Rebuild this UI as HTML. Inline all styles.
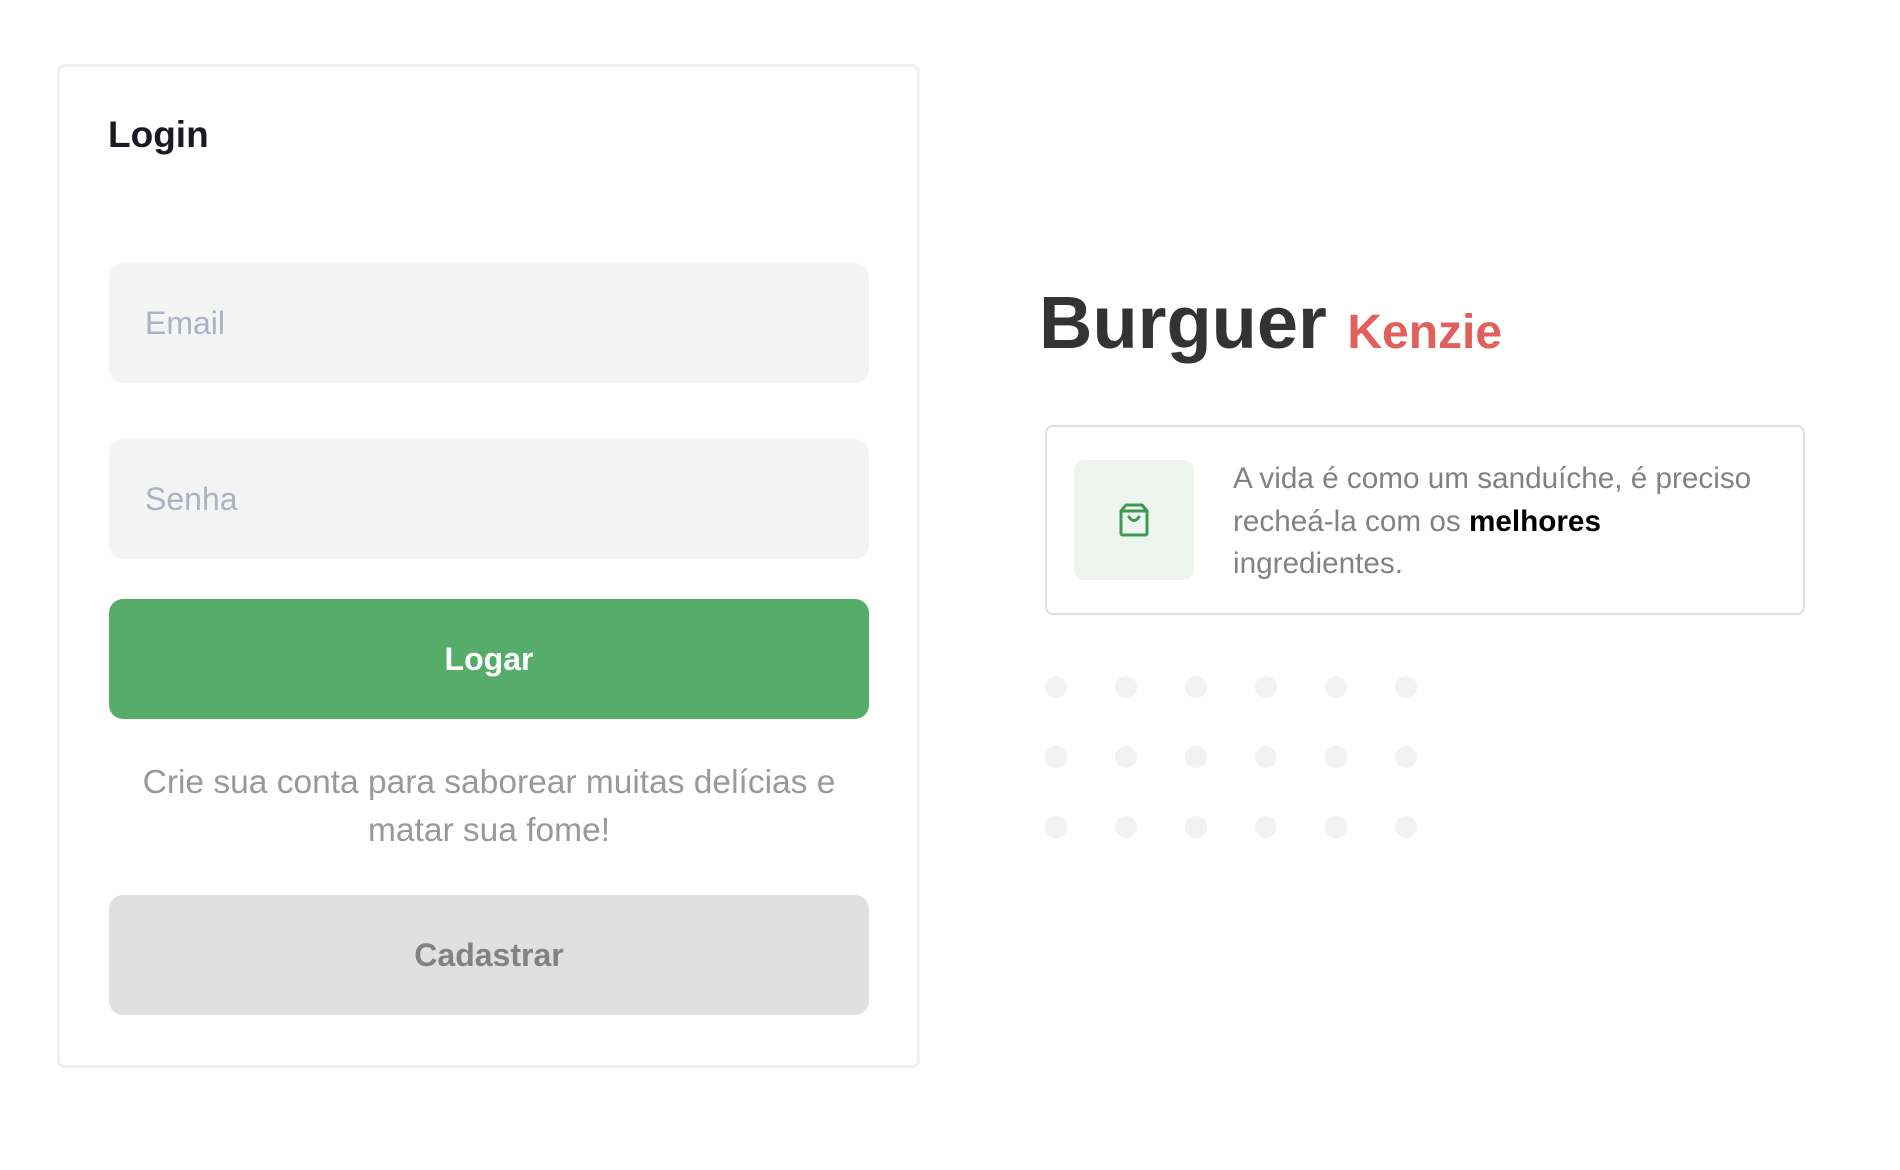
<!DOCTYPE html>
<html><head><meta charset="utf-8"><style>
*{margin:0;padding:0;box-sizing:border-box}
body{width:1900px;height:1170px;background:#fff;font-family:"Liberation Sans",sans-serif;position:relative;overflow:hidden}
.card{position:absolute;left:57px;top:64px;width:863px;height:1004px;border:3px solid #f0f0f0;border-radius:8px}
.abs{position:absolute}
.login{left:108px;top:114px;font-size:37px;font-weight:bold;color:#1a1a24}
.inp{left:109px;width:760px;height:120px;background:#f4f4f4;border-radius:14px;color:#a8b3c5;font-size:32px;padding-left:36px;line-height:120px}
.btn{left:109px;width:760px;height:120px;border-radius:14px;text-align:center;line-height:120px;font-size:32px;font-weight:bold}
.txt{left:89px;width:800px;text-align:center;font-size:33.5px;color:#999;line-height:48px}
.dot{position:absolute;width:22px;height:22px;border-radius:50%;background:#f2f2f2}
</style></head><body>
<div class="card"></div>
<div class="abs login">Login</div>
<div class="abs inp" style="top:263px">Email</div>
<div class="abs inp" style="top:439px">Senha</div>
<div class="abs btn" style="top:599px;background:#55ad69;color:#fff">Logar</div>
<div class="abs txt" style="top:759px">Crie sua conta para saborear muitas delícias e<br>matar sua fome!</div>
<div class="abs btn" style="top:895px;background:#e0e0e0;color:#828282">Cadastrar</div>

<div class="abs" style="left:1039px;top:280px;font-size:74px;font-weight:bold;color:#333;white-space:nowrap;line-height:86px">Burguer <span style="font-size:48px;color:#e0605c">Kenzie</span></div>

<div class="abs" style="left:1045px;top:425px;width:760px;height:190px;border:2px solid #e0e0e0;border-radius:8px"></div>
<div class="abs" style="left:1074px;top:460px;width:120px;height:120px;background:#eef5ef;border-radius:10px">
<svg width="120" height="120" viewBox="0 0 120 120" style="position:absolute;left:0;top:0"><g fill="none" stroke="#3d9a55" stroke-width="3" stroke-linejoin="round" stroke-linecap="round"><path d="M47 73 V51 L52 45 H68 L73 51 V73 Q73 75 71 75 H49 Q47 75 47 73 Z"/><path d="M47 51 H73"/><path d="M55 57 Q60 64 65 57"/></g></svg>
</div>
<div class="abs" style="left:1233px;top:458px;font-size:29.7px;color:#828282;line-height:42.5px;white-space:nowrap">A vida é como um sanduíche, é preciso<br>recheá-la com os <b style="color:#000">melhores</b><br>ingredientes.</div>

<div class="dot" style="left:1045px;top:676px"></div><div class="dot" style="left:1115px;top:676px"></div><div class="dot" style="left:1185px;top:676px"></div><div class="dot" style="left:1255px;top:676px"></div><div class="dot" style="left:1325px;top:676px"></div><div class="dot" style="left:1395px;top:676px"></div>
<div class="dot" style="left:1045px;top:746px"></div><div class="dot" style="left:1115px;top:746px"></div><div class="dot" style="left:1185px;top:746px"></div><div class="dot" style="left:1255px;top:746px"></div><div class="dot" style="left:1325px;top:746px"></div><div class="dot" style="left:1395px;top:746px"></div>
<div class="dot" style="left:1045px;top:816px"></div><div class="dot" style="left:1115px;top:816px"></div><div class="dot" style="left:1185px;top:816px"></div><div class="dot" style="left:1255px;top:816px"></div><div class="dot" style="left:1325px;top:816px"></div><div class="dot" style="left:1395px;top:816px"></div>
</body></html>
